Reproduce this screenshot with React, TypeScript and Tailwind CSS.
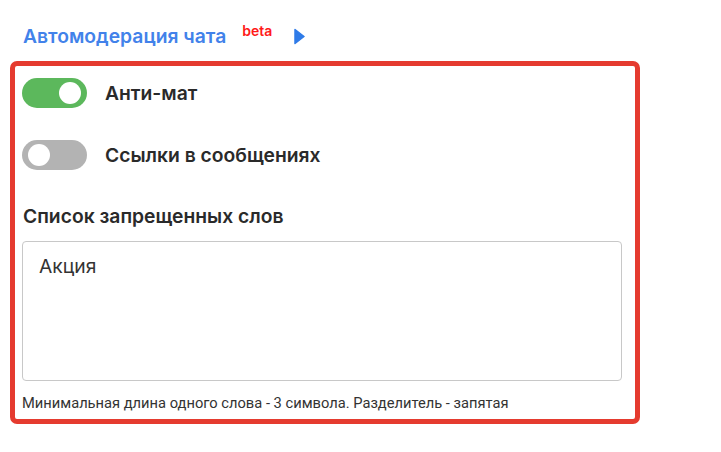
import React, { useState } from "react";

const Toggle = ({ on, onClick }: { on: boolean; onClick: () => void }) => (
  <button
    onClick={onClick}
    className={`flex h-[30px] w-[65px] shrink-0 items-center rounded-full px-[6px] ${
      on ? "justify-end bg-[#5cb85c]" : "justify-start bg-[#b3b3b3]"
    }`}
  >
    <span className="block h-[22px] w-[22px] rounded-full bg-white" />
  </button>
);

export default function App() {
  const [antiMat, setAntiMat] = useState(true);
  const [links, setLinks] = useState(false);

  return (
    <div className="min-h-[452px] w-[721px] bg-white pl-[10px] pt-[22px] font-['Inter',sans-serif]">
      <div className="flex items-start pl-[13px]">
        <span className="text-[19.3px] font-semibold leading-[28px] text-[#4282ea]">Автомодерация чата</span>
        <span className="ml-[16px] mt-[1px] text-[14px] font-semibold leading-[16px] text-[#ff1a1a]">beta</span>
        <svg className="ml-[22px] mt-[6px]" width="11" height="17" viewBox="0 0 11 17">
          <path d="M1 1.5 L10 8.5 L1 15.5 Z" fill="#2f7be8" stroke="#2f7be8" strokeWidth="1.5" strokeLinejoin="round" />
        </svg>
      </div>

      <div className="mt-[11px] flex w-[630px] flex-col rounded-[7px] border-[5px] border-[#e53b2f] pl-[7px] pr-[13px] pt-[12px] pb-[7px]">
        <div className="flex items-center gap-[18px]">
          <Toggle on={antiMat} onClick={() => setAntiMat(!antiMat)} />
          <span className="text-[19.3px] font-semibold text-[#2a2a2a]">Анти-мат</span>
        </div>
        <div className="mt-[32px] flex items-center gap-[18px]">
          <Toggle on={links} onClick={() => setLinks(!links)} />
          <span className="text-[19.3px] font-semibold text-[#2a2a2a]">Ссылки в сообщениях</span>
        </div>

        <div className="mt-[33px] pl-[1px] text-[19.3px] font-semibold leading-[26px] text-[#2a2a2a]">
          Список запрещенных слов
        </div>
        <textarea
          defaultValue="Акция"
          className="mt-[12px] h-[140px] w-[600px] resize-none rounded-[4px] border border-[#c8c8c8] px-[16px] py-[11px] text-[19.3px] leading-[26px] text-[#333] outline-none font-['Inter',sans-serif]"
        />
        <div className="mt-[13px] font-['Roboto',sans-serif] text-[14.7px] leading-[18px] text-[#333]">
          Минимальная длина одного слова - 3 символа. Разделитель - запятая
        </div>
      </div>
    </div>
  );
}
